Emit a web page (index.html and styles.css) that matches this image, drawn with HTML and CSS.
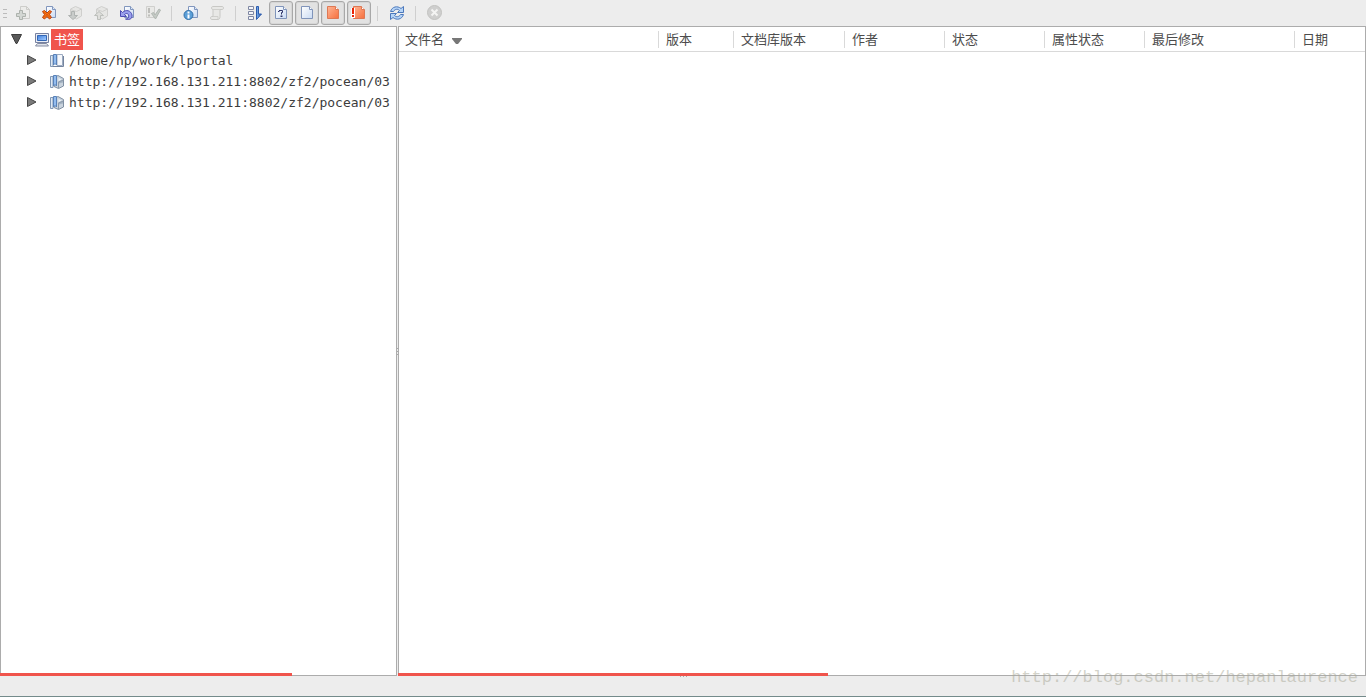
FILE: index.html
```html
<!DOCTYPE html>
<html lang="zh-CN">
<head>
<meta charset="utf-8">
<title>书签</title>
<link rel="stylesheet" href="styles.css">
</head>
<body>
<svg class="defs" aria-hidden="true">
  <defs>
    <linearGradient id="blue" x1="0" y1="0" x2="1" y2="1"><stop offset="0" stop-color="#fff"/><stop offset="1" stop-color="#c9daf3"/></linearGradient>
    <linearGradient id="orange" x1="0" y1="0" x2="1" y2="1"><stop offset="0" stop-color="#ffb594"/><stop offset="1" stop-color="#f66f3d"/></linearGradient>
    <linearGradient id="arrow" x1="0" y1="0" x2="1" y2="0"><stop offset="0" stop-color="#7fb2ee"/><stop offset="1" stop-color="#1f4fa8"/></linearGradient>
    <linearGradient id="screen" x1="0" y1="0" x2="1" y2="1"><stop offset="0" stop-color="#3d7fe0"/><stop offset="1" stop-color="#a9d0ff"/></linearGradient>
  </defs>
  <symbol id="page-small" viewBox="0 0 16 16"><path d="M5.500 1.500h6l3 3v8h-9z" fill="url(#blue)" stroke="#8196bd"/><path d="M11.500 1.500v3h3" fill="#dce7f8" stroke="#8196bd"/></symbol>
  <symbol id="page-large" viewBox="0 0 16 16"><path d="M2.500 1.500h8l3 3v9h-11z" fill="url(#blue)" stroke="#8094ba"/><path d="M10.500 1.500v3h3" fill="#fff" stroke="#8094ba"/></symbol>
  <symbol id="page-orange" viewBox="0 0 16 16"><path d="M2.500 1.500h8l3 3v9h-11z" fill="url(#orange)" stroke="#de7854"/><path d="M10.500 1.500v3h3" fill="#fff" stroke="#de7854"/></symbol>
  <symbol id="repo" viewBox="0 0 16 16">
    <path d="M5 3.500l4-2 5.500 3v7.500L9.500 14.500 5 12.500z" fill="#c9d3dd" stroke="#8090a3"/><path d="M9.500 7.500l4.500-2v3l-4 1z" fill="#a5b3c2"/><path d="M9.500 4l3 1.500-3 1.500z" fill="#eef3f7"/><path d="M9.500 8l5-2M9.500 8v6" fill="none" stroke="#8c9bad"/>
    <path d="M1.500 2.500h2.500v11H1.500z" fill="#dfe9f4" stroke="#8298b5"/><path d="M4.500 1.500h3v10.500l-1.500-1.500-1.500 1.500z" fill="#93bcee" stroke="#5881b8"/>
  </symbol>
</svg>
<div class="app">
  <header class="toolbar">
    <span class="grip"></span>
    <button class="tool" aria-label="添加" disabled><svg viewBox="0 0 16 16"><path d="M5.500 1.500h6l3 3v9h-9z" fill="#ececea" stroke="#cdcdca"/><path d="M11.500 1.500v3h3" fill="none" stroke="#cdcdca"/><path d="M4.500 5.500h3v3h3v3h-3v3h-3v-3h-3v-3h3z" fill="#d3d7d3" stroke="#adb2ad"/></svg></button>
    <button class="tool" aria-label="删除"><svg viewBox="0 0 16 16"><use href="#page-small"/><path d="M1.500 6.500l2-1L6 8l2.500-2.500 2 1L8.500 9.500l2 3-2 1.500L6 11.500 3.500 14l-2-1.500 2-3z" fill="#f47b16" stroke="#bd3f0d"/><path d="M2.500 7l7 5.500M9.500 7l-7 5.500" stroke="#e4540d"/></svg></button>
    <button class="tool" aria-label="更新" disabled><svg viewBox="0 0 16 16"><path d="M3.500 4l5-2.500 6 2.500v7l-5 3-6-3z" fill="#e6e6e4" stroke="#cfcfcd"/><path d="M3.500 4.500l6 2 5-2.500" fill="none" stroke="#cfcfcd"/><path d="M4.500 6.500h3v4h3L6 14.500 1.500 10.500h3z" fill="#c9ccca" stroke="#afb3b1"/></svg></button>
    <button class="tool" aria-label="提交" disabled><svg viewBox="0 0 16 16"><path d="M3.500 4l5-2.500 6 2.500v7l-5 3-6-3z" fill="#e6e6e4" stroke="#cfcfcd"/><path d="M3.500 4.500l6 2 5-2.500" fill="none" stroke="#cfcfcd"/><path d="M4.500 14.500v-4h-3L6 6.500l4.500 4h-3v4z" fill="#dededb" stroke="#bcbfbb"/></svg></button>
    <button class="tool" aria-label="还原"><svg viewBox="0 0 16 16"><use href="#page-small"/><path d="M1.500 5.500v6h6l-2-2c2-2 5-1 4 3-.5 1-1.500 1.500-3 1.500 5 1.500 7-1 6.500-4C12 5.500 7 4 3.500 7.500z" fill="#9aa0ed" stroke="#4d4cb2"/></svg></button>
    <button class="tool" aria-label="标记为已解决" disabled><svg viewBox="0 0 16 16"><path d="M1.500 1.500h8v11h-8z" fill="#e9e9e7" stroke="#cfcfcd"/><path d="M4 3v5M4 9.500v2" stroke="#bdbdba" stroke-width="2"/><path d="M6.500 8.500l2-1 1.500 2.500 4-6 1.500 1-5 9z" fill="#c4cac5" stroke="#b1b7b2"/></svg></button>
    <span class="separator"></span>
    <button class="tool" aria-label="信息"><svg viewBox="0 0 16 16"><use href="#page-small"/><circle cx="5.500" cy="10" r="4.500" fill="#5b9fd8" stroke="#316fa8"/><path d="M5.500 6.500v2M5.500 9.500v4" stroke="#fff" stroke-width="2"/></svg></button>
    <button class="tool" aria-label="日志" disabled><svg viewBox="0 0 16 16"><path d="M4 1.500h9c2 0 2 3 0 3h-2v7c0 2-1 3-2 3H3c-2 0-2-3 0-3h1v-7c-2 0-2-3 0-3z" fill="#e8e8e6" stroke="#c8c8c5"/><path d="M4 4.500h7M4 11.500h5v2.500" fill="none" stroke="#cfcfcc"/></svg></button>
    <span class="separator"></span>
    <button class="tool" aria-label="排序"><svg viewBox="0 0 16 16"><path d="M1.500 1.500h5v3h-5zM1.500 6.500h5v3h-5zM1.500 11.500h5v3h-5z" fill="#f5f6fa" stroke="#7e87a3"/><path d="M9.500 1.500h2v7.500h3l-5 5.500z" fill="url(#arrow)" stroke="#2c5cae"/></svg></button>
    <button class="tool on" aria-label="显示未受控文件" aria-pressed="true"><svg viewBox="0 0 16 16"><use href="#page-large"/><path d="M5 6.500h1.500M6 5.500h3.500M9.500 5.500v2M9.500 7.500H8.500M8.500 7.500v2" fill="none" stroke="#2f3569"/><path d="M7.500 10.500h2v1.500h-2z" fill="#2f3569"/></svg></button>
    <button class="tool on" aria-label="显示未修改文件" aria-pressed="true"><svg viewBox="0 0 16 16"><use href="#page-large"/></svg></button>
    <button class="tool on" aria-label="显示已修改文件" aria-pressed="true"><svg viewBox="0 0 16 16"><use href="#page-orange"/></svg></button>
    <button class="tool on" aria-label="显示冲突文件" aria-pressed="true"><svg viewBox="0 0 16 16"><use href="#page-orange"/><path d="M0 3h4v10H0z" fill="#fff"/><path d="M1 3h2v6H1zM1 10h2v2H1z" fill="#e92505"/></svg></button>
    <span class="separator"></span>
    <button class="tool" aria-label="刷新"><svg viewBox="0 0 16 16"><path d="M1.500 6.500C3 1.500 8.500.5 12 3.500l2.500-2v6h-6l2-2C8.500 3.500 6 4 4.500 6.500z" fill="#b5d4f7" stroke="#4c78bb"/><path d="M14.500 9.500c-1.500 5-7 6-10.500 3l-2.500 2v-6h6l-2 2c2 2 4.500 1.500 6-1z" fill="#b5d4f7" stroke="#4c78bb"/></svg></button>
    <span class="separator"></span>
    <button class="tool" aria-label="停止" disabled><svg viewBox="0 0 16 16"><circle cx="7.500" cy="7.500" r="7" fill="#cfcfce" stroke="#c2c2c0"/><path d="M4.500 4.500l6 6M10.500 4.500l-6 6" stroke="#f4f4f3" stroke-width="2"/></svg></button>
  </header>

  <main class="panes">
    <nav class="pane bookmarks">
      <ul class="tree" role="tree">
        <li role="treeitem" aria-expanded="true">
          <div class="row">
            <svg class="toggle" viewBox="0 0 11 11"><path d="M.5 .500h10L6 9.500H5z" fill="#5a5a5a" stroke="#3e3e3e"/></svg>
            <svg class="icon" viewBox="0 0 16 16"><path d="M1.500 1.500h13v9h-13z" fill="#e9edf5" stroke="#7781a0"/><path d="M3.500 3.500h9v5h-9z" fill="url(#screen)" stroke="#3467b4"/><path d="M3.500 11.500h9l2 2.500h-13z" fill="#e1e4ea" stroke="#838ba2"/></svg>
            <span class="label selected">书签</span>
          </div>
          <ul class="children" role="group">
            <li class="row" role="treeitem" aria-expanded="false">
              <svg class="toggle" viewBox="0 0 11 11"><path d="M1.500 .500v9L10 5z" fill="#7b7b7b" stroke="#464646"/></svg>
              <svg class="icon" viewBox="0 0 16 16"><path d="M1.500 2.500h2.500v11H1.500z" fill="#dfe9f4" stroke="#8298b5"/><path d="M8 1.500h5.500v11H8z" fill="#f6f8fc" stroke="#9cabc1"/><path d="M14.500 3v10.500H4" fill="none" stroke="#74849e"/><path d="M4.500 1.500h3v10.500l-1.500-1.500-1.500 1.500z" fill="#93bcee" stroke="#5881b8"/></svg>
              <span class="label">/home/hp/work/lportal</span>
            </li>
            <li class="row" role="treeitem" aria-expanded="false">
              <svg class="toggle" viewBox="0 0 11 11"><path d="M1.500 .500v9L10 5z" fill="#7b7b7b" stroke="#464646"/></svg>
              <svg class="icon"><use href="#repo"/></svg>
              <span class="label">http://192.168.131.211:8802/zf2/pocean/03</span>
            </li>
            <li class="row" role="treeitem" aria-expanded="false">
              <svg class="toggle" viewBox="0 0 11 11"><path d="M1.500 .500v9L10 5z" fill="#7b7b7b" stroke="#464646"/></svg>
              <svg class="icon"><use href="#repo"/></svg>
              <span class="label">http://192.168.131.211:8802/zf2/pocean/03</span>
            </li>
          </ul>
        </li>
      </ul>
      <div class="scroll scroll-tree"></div>
    </nav>
    <div class="splitter"><span class="dots"></span></div>
    <section class="pane files">
      <table class="list">
        <thead>
          <tr>
            <th class="c-name">文件名<svg class="sort" viewBox="0 0 10 6"><path d="M0 0h10v1L6 6H4L0 1z" fill="#777"/></svg></th>
            <th class="c-rev">版本</th>
            <th class="c-repo">文档库版本</th>
            <th class="c-mid">作者</th>
            <th class="c-mid">状态</th>
            <th class="c-mid">属性状态</th>
            <th class="c-changed">最后修改</th>
            <th>日期</th>
          </tr>
        </thead>
      </table>
      <div class="scroll scroll-list"></div>
    </section>
  </main>
  <footer class="status"><span class="dots flat"></span></footer>
  <div class="watermark">http://blog.csdn.net/hepanlaurence</div>
</div>
</body>
</html>
```
FILE: styles.css
```css
* { box-sizing: border-box; }

body {
  margin: 0;
  background: #ededed;
  color: #3c3c3c;
  font: 13px/20px "DejaVu Sans Mono", "Noto Sans CJK SC", monospace;
}

.defs { position: absolute; width: 0; height: 0; }

.app {
  position: relative;
  display: flex;
  flex-direction: column;
  height: 100vh;
  overflow: hidden;
}

.toolbar {
  display: flex;
  align-items: center;
  gap: 2px;
  padding: 1px 3px;
}

.grip {
  width: 4px;
  height: 9px;
  margin-right: 2px;
  background: repeating-linear-gradient(#bbb 0 1px, transparent 1px 4px);
}

.tool {
  display: flex;
  align-items: center;
  justify-content: center;
  width: 24px;
  height: 24px;
  padding: 0;
  border: 1px solid transparent;
  border-radius: 3px;
  background: none;
}

.tool.on { border-color: #a8a8a8; background: #e2e2e2; box-shadow: inset 0 0 0 1px #d6d6d6; }
.tool svg, .icon { width: 16px; height: 16px; flex: none; }

.separator { width: 10px; height: 15px; background: linear-gradient(#cfcfcf, #cfcfcf) 4px 0 / 1px 100% no-repeat; }

.panes {
  display: flex;
  flex: 1;
  min-height: 0;
}

.pane {
  display: flex;
  flex-direction: column;
  justify-content: space-between;
  border: 1px solid #acacac;
  background: #fff;
}

.bookmarks { flex: 0 0 397px; }
.files { flex: 1; min-width: 0; }

.splitter {
  display: flex;
  align-items: center;
  width: 1px;
  background: #ededed;
}

.dots { width: 1px; height: 7px; background: repeating-linear-gradient(#aaa 0 1px, transparent 1px 3px); }
.dots.flat { width: 7px; height: 1px; background: repeating-linear-gradient(90deg, #aaa 0 1px, transparent 1px 3px); }

.tree, .children { margin: 0; padding: 0; list-style: none; }
.tree { padding: 2px 0 0 10px; overflow: hidden; }
.children { padding-left: 15px; }

.row { display: flex; align-items: center; height: 21px; white-space: nowrap; }
.toggle { width: 11px; height: 11px; margin-right: 12px; flex: none; }
.label { padding-left: 4px; }
.label.selected { margin-left: 1px; padding: 0 3px; background: #f0544c; color: #fff; line-height: 21px; }

.scroll { height: 3px; margin: 0 -1px -1px; background: #f0544c; }
.scroll-tree { width: 292px; }
.scroll-list { width: 430px; }

.list { width: 100%; table-layout: fixed; border-spacing: 0; }

.list th {
  height: 25px;
  padding: 2px 7px 0;
  border-bottom: 1px solid #d9d9d9;
  background: linear-gradient(#d9d9d9, #d9d9d9) 100% 4px / 1px 17px no-repeat;
  color: #4c4c4c;
  font-weight: 400;
  text-align: left;
  white-space: nowrap;
}

.list th:last-child { background: none; }
.list .c-name { width: 260px; padding-left: 6px; }
.c-rev { width: 75px; }
.c-repo { width: 111px; }
.c-mid { width: 100px; }
.c-changed { width: 150px; }
.sort { width: 10px; height: 6px; margin-left: 8px; }

.status {
  display: flex;
  justify-content: center;
  height: 21px;
  border-bottom: 1px solid #748b8b;
}

.watermark {
  position: absolute;
  right: 8px;
  bottom: 9px;
  color: rgba(168, 168, 150, .5);
  font: 17px/20px "Liberation Mono", monospace;
}
```
